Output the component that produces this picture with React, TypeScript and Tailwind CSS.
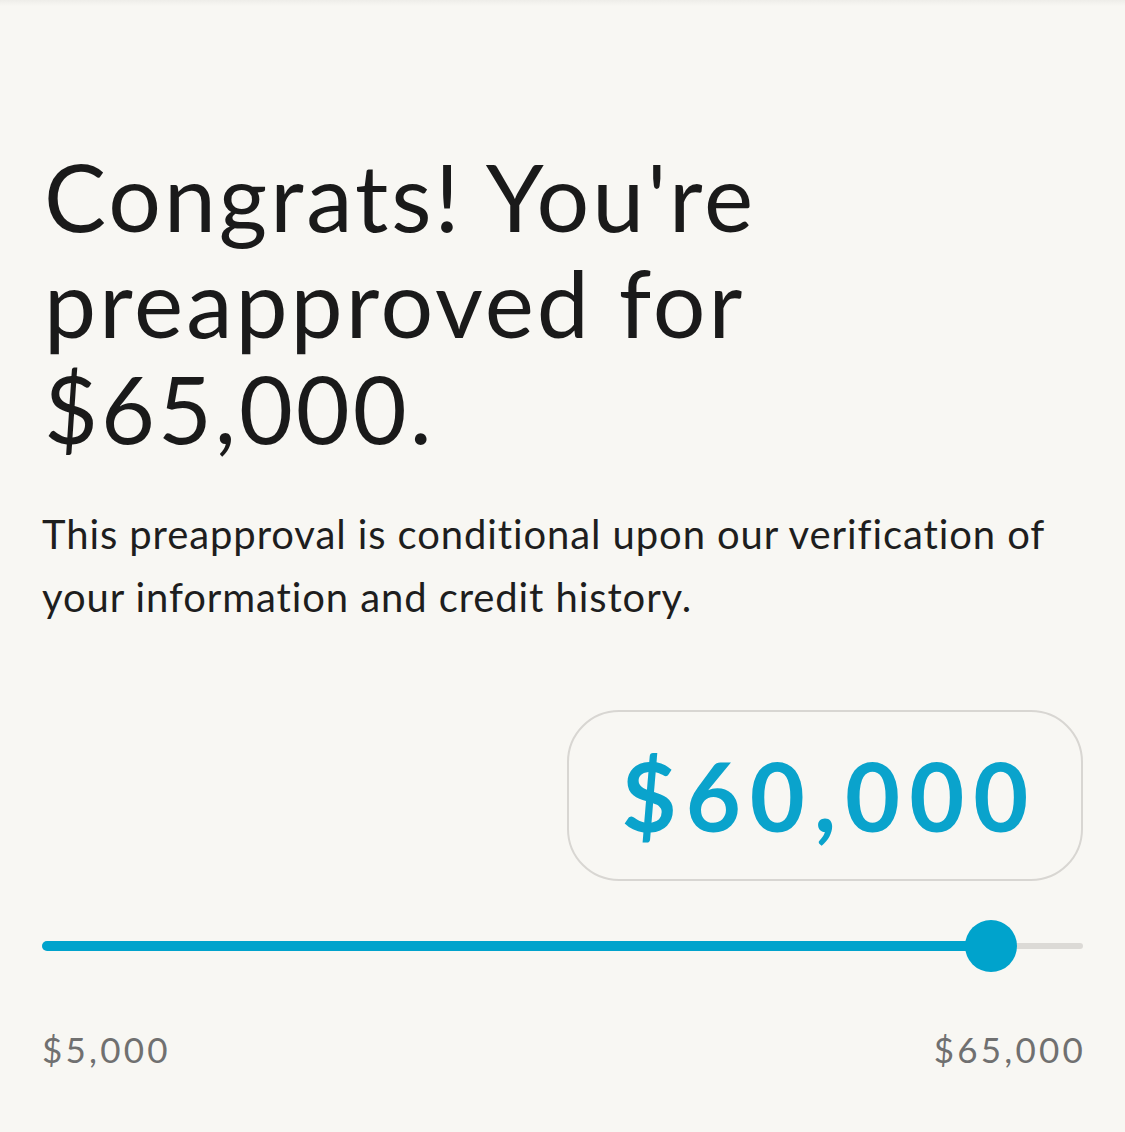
import React from "react";

export default function App() {
  return (
    <div
      className="w-[1125px] h-[1132px] bg-[#f8f7f3] text-[#1a1a1a] overflow-hidden"
      style={{ fontFamily: "Lato, 'Open Sans', sans-serif" }}
    >
      <div className="h-[6px] bg-gradient-to-b from-[#eeede9] to-[#f8f7f3]" />
      <div className="pl-[44px] pr-[42px] pt-[137px]">
        <h1 className="text-[93px] leading-[106px] font-normal tracking-[3px]">
          Congrats! You're
          <br />
          preapproved for
          <br />
          $65,000.
        </h1>
        <p className="mt-[42px] -ml-[2px] text-[40px] leading-[63px] tracking-[0.9px] text-[#1e1e1e]">
          This preapproval is conditional upon our verification of your information and credit history.
        </p>
        <div className="mt-[81px] flex justify-end">
          <div className="w-[516px] h-[171px] rounded-[52px] border-2 border-[#d8d6d2] flex items-center justify-center">
            <span className="text-[95px] font-bold text-[#0aa3cc] tracking-[9px] pl-[9px]">$60,000</span>
          </div>
        </div>
        <div className="relative mt-[38px] h-[54px] -ml-[2px]">
          <div className="absolute left-0 right-0 top-[24px] h-[6px] rounded-full bg-[#dcdad6]" />
          <div className="absolute left-0 right-[92px] top-[22px] h-[10px] rounded-full bg-[#00a3cc]" />
          <div className="absolute top-[1px] right-[66px] w-[52px] h-[52px] rounded-full bg-[#00a3cc]" />
        </div>
        <div className="mt-[50px] -ml-[2px] flex justify-between text-[35px] tracking-[3.2px] text-[#707070]">
          <span>$5,000</span>
          <span className="-mr-[3px]">$65,000</span>
        </div>
      </div>
    </div>
  );
}
